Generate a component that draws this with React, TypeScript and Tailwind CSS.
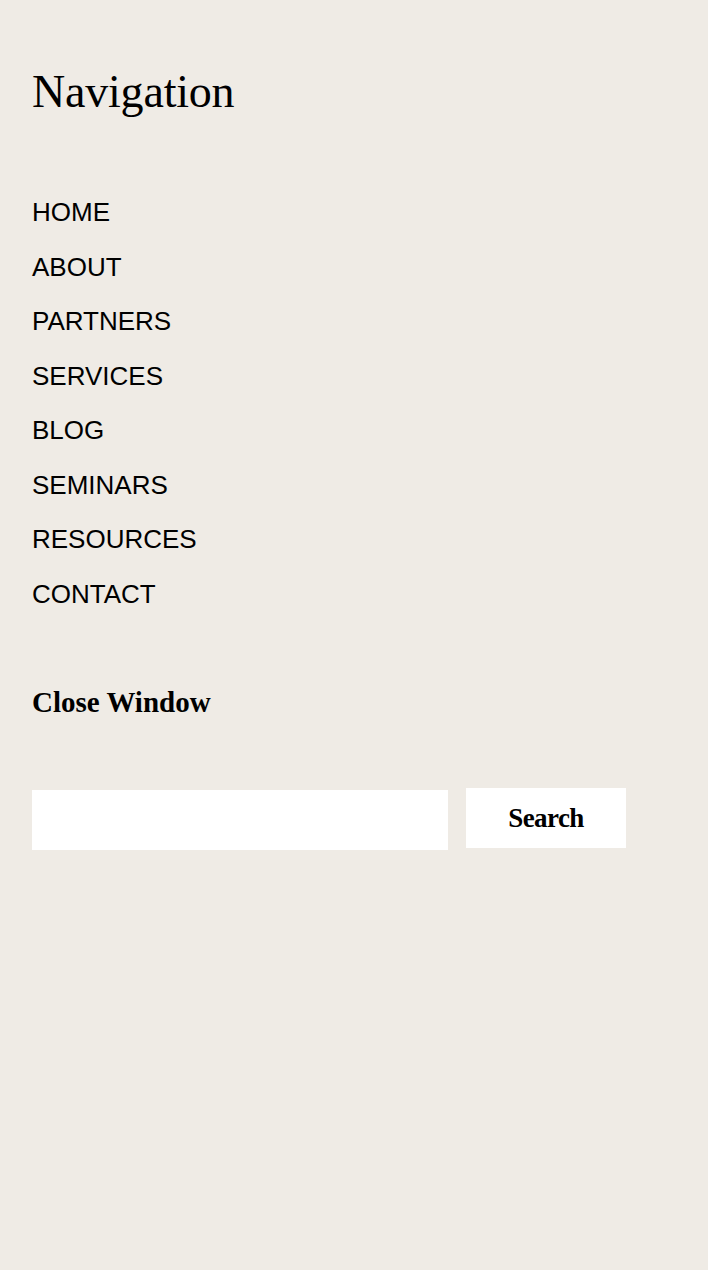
const navItems = [
  "HOME",
  "ABOUT",
  "PARTNERS",
  "SERVICES",
  "BLOG",
  "SEMINARS",
  "RESOURCES",
  "CONTACT",
];

export default function App() {
  return (
    <div className="min-h-[1270px] w-full bg-[#efebe5] px-8 pt-[64px] text-black">
      {/* Heading */}
      <h2 className="h-[56px] font-['Liberation_Serif',serif] text-[46px] leading-[56px] tracking-[-0.2px]">
        Navigation
      </h2>

      {/* Menu links */}
      <nav className="mt-[65px] flex flex-col">
        {navItems.map((item) => (
          <a
            key={item}
            href="#"
            className="h-[54.5px] font-['Liberation_Sans',Arial,sans-serif] text-[26px] leading-[54.5px]"
          >
            {item}
          </a>
        ))}
      </nav>

      <button className="mt-[61px] block h-[40px] font-['Liberation_Serif',serif] text-[29px] leading-[40px] font-bold">
        Close Window
      </button>

      {/* Search */}
      <form className="mt-[66px] flex items-start gap-[18px]">
        <input
          type="text"
          className="mt-[2px] h-[60px] w-[416px] bg-white outline-none"
        />
        <button
          type="button"
          className="h-[60px] w-[160px] bg-white font-['Liberation_Serif',serif] text-[27px] font-bold tracking-[-0.6px]"
        >
          Search
        </button>
      </form>
    </div>
  );
}
